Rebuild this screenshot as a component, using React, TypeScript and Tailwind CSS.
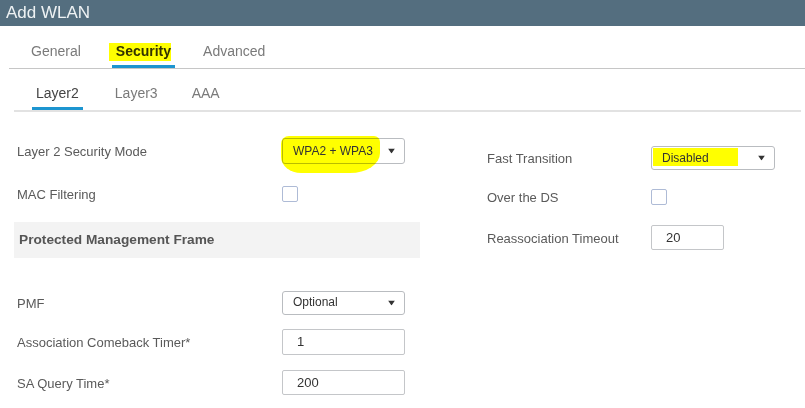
import type { ReactNode } from "react";

function Arrow() {
  return (
    <svg width="7" height="5" viewBox="0 0 7 5" className="absolute right-[9px] top-1/2 -translate-y-1/2">
      <path d="M0 0h7L3.5 5z" fill="#333" />
    </svg>
  );
}

function SelectBox({ value, className, children }: { value: string; className: string; children?: ReactNode }) {
  return (
    <div className={`relative rounded-[3px] border border-[#b9bcc0] bg-white pl-[10px] text-[12px] leading-none text-[#333] flex items-center ${className}`}>
      {children}
      <span className="relative">{value}</span>
      <Arrow />
    </div>
  );
}

function TextBox({ value, className }: { value: string; className: string }) {
  return (
    <div className={`flex items-center rounded-[2px] border border-[#c4c6c9] bg-white pl-[14px] text-[13px] text-[#333] ${className}`}>
      {value}
    </div>
  );
}

function Checkbox() {
  return <div className="h-[16px] w-[16px] rounded-[2px] border-[1.5px] border-[#aebbd6] bg-white" />;
}

function Row({ label, labelWidth, className, children }: { label: string; labelWidth: string; className: string; children: ReactNode }) {
  return (
    <div className={`flex items-center ${className}`}>
      <div className={`${labelWidth} shrink-0 pt-[2px] text-[13px] text-[#5a5a5a]`}>{label}</div>
      {children}
    </div>
  );
}

export default function App() {
  return (
    <div className="h-[408px] w-[805px] overflow-hidden bg-white font-['Liberation_Sans',Arial,sans-serif]">
      <header className="flex h-[26px] items-center bg-[#546e7f] pl-[6px] text-[17px] text-[#eef2f4]">
        Add WLAN
      </header>

      <nav className="ml-[9px] flex h-[43px] items-end border-b border-[#c6c6c6] text-[14px]">
        <div className="ml-[22px] border-b-[3px] border-transparent pb-[3px] text-[#7a7a7a]">General</div>
        <div className="relative ml-[31px] border-b-[3px] border-[#1d95d0] px-[4px] pb-[3px] font-semibold text-[#333]">
          Security
          <span className="absolute left-[-3px] top-[2px] h-[18px] w-[62px] bg-[#ffff00] mix-blend-multiply" />
        </div>
        <div className="ml-[28px] border-b-[3px] border-transparent pb-[3px] text-[#7a7a7a]">Advanced</div>
      </nav>

      <nav className="ml-[14px] mr-[4px] flex h-[43px] items-end border-b-2 border-[#e2e2e2] text-[14px]">
        <div className="ml-[18px] border-b-[3px] border-[#1d95d0] px-[4px] pb-[3px] text-[#444]">Layer2</div>
        <div className="ml-[32px] border-b-[3px] border-transparent pb-[3px] text-[#7a7a7a]">Layer3</div>
        <div className="ml-[34px] border-b-[3px] border-transparent pb-[3px] text-[#7a7a7a]">AAA</div>
      </nav>

      <div className="flex">
        <div className="ml-[14px] flex w-[406px] flex-col">
          <Row label="Layer 2 Security Mode" labelWidth="w-[268px] pl-[3px]" className="mt-[26px] h-[26px]">
            <SelectBox value="WPA2 + WPA3" className="h-[26px] w-[123px]">
              <span className="absolute left-[-2px] top-[-3px] h-[37px] w-[99px] rounded-[8px_6px_30px_20px/8px_6px_20px_16px] bg-[#ffff00] mix-blend-multiply" />
            </SelectBox>
          </Row>
          <Row label="MAC Filtering" labelWidth="w-[268px] pl-[3px]" className="mt-[22px] h-[16px]">
            <Checkbox />
          </Row>
          <div className="mt-[20px] flex h-[36px] items-center bg-[#f3f3f3] pl-[5px] text-[13.7px] font-bold text-[#555]">
            Protected Management Frame
          </div>
          <Row label="PMF" labelWidth="w-[268px] pl-[3px]" className="mt-[33px] h-[24px]">
            <SelectBox value="Optional" className="h-[24px] w-[123px] pb-[2px]" />
          </Row>
          <Row label="Association Comeback Timer*" labelWidth="w-[268px] pl-[3px]" className="mt-[14px] h-[26px]">
            <TextBox value="1" className="h-[26px] w-[123px]" />
          </Row>
          <Row label="SA Query Time*" labelWidth="w-[268px] pl-[3px]" className="mt-[15px] h-[25px]">
            <TextBox value="200" className="h-[25px] w-[123px]" />
          </Row>
        </div>

        <div className="ml-[67px] flex flex-col">
          <Row label="Fast Transition" labelWidth="w-[164px]" className="mt-[34px] h-[24px]">
            <SelectBox value="Disabled" className="h-[24px] w-[124px]">
              <span className="absolute left-[1px] top-[1px] h-[18px] w-[85px] bg-[#ffff00] mix-blend-multiply" />
            </SelectBox>
          </Row>
          <Row label="Over the DS" labelWidth="w-[164px]" className="mt-[19px] h-[16px]">
            <Checkbox />
          </Row>
          <Row label="Reassociation Timeout" labelWidth="w-[164px]" className="mt-[20px] h-[25px]">
            <TextBox value="20" className="h-[25px] w-[73px]" />
          </Row>
        </div>
      </div>
    </div>
  );
}
